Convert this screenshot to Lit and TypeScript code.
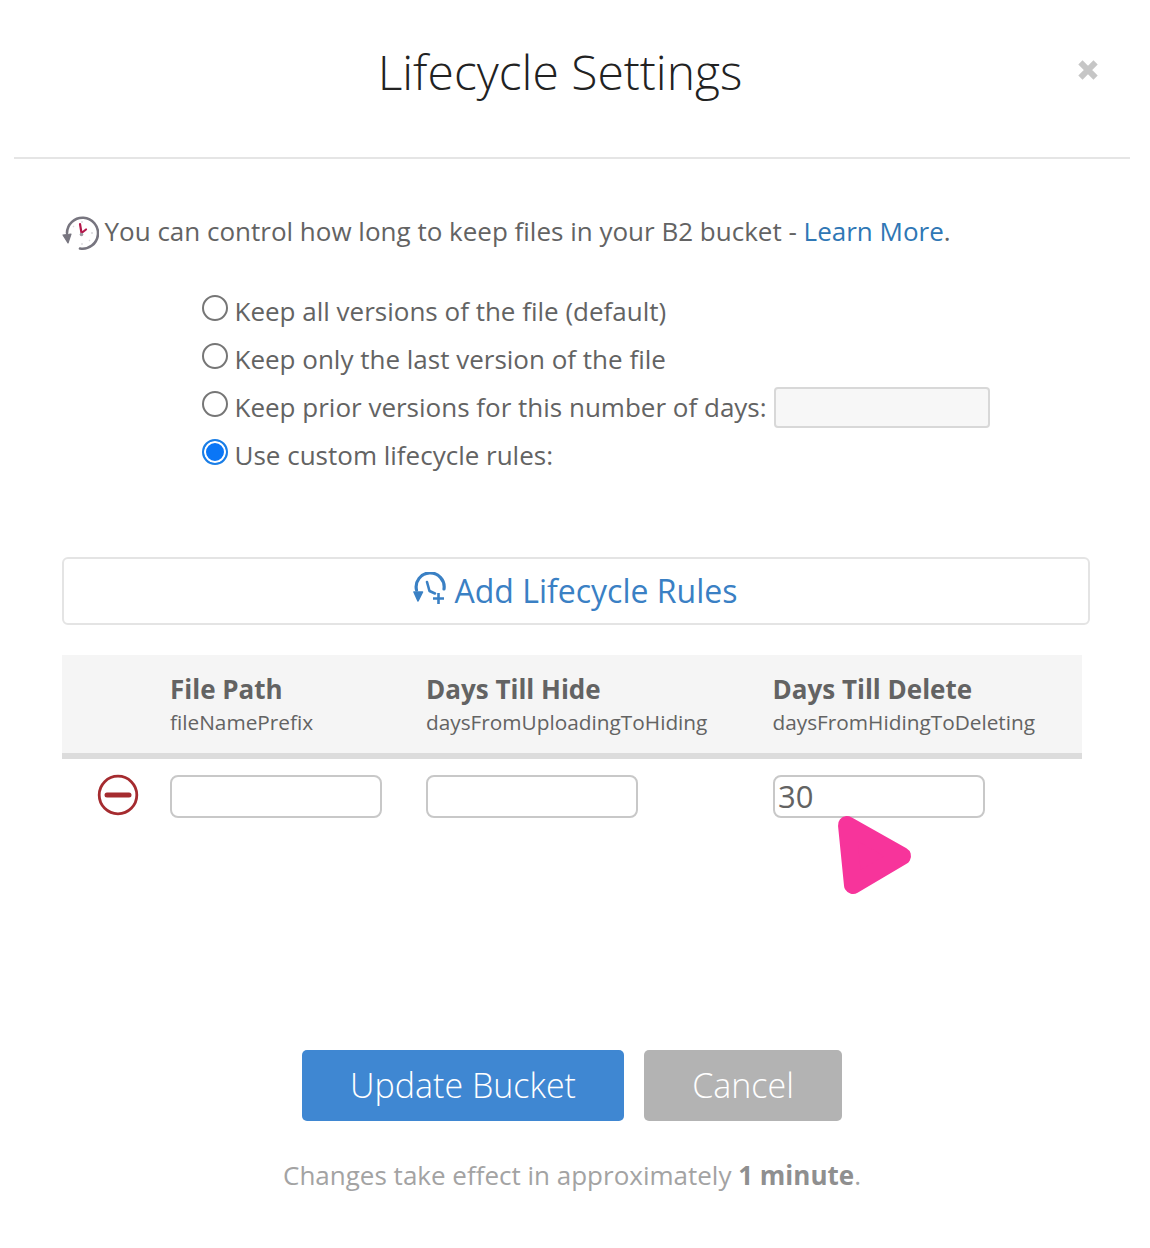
import { LitElement, html, css } from "lit";
import { customElement } from "lit/decorators.js";

@customElement("app-root")
export class AppRoot extends LitElement {
  static styles = css`
    :host { display: block; width: 1150px; height: 1248px; background: #fff; font-family: "Open Sans", sans-serif; color: #636363; position: relative; overflow: hidden; }
    * { box-sizing: border-box; }
    .header { margin: 0 20px 0 14px; padding-right: 24px; height: 159px; border-bottom: 2px solid #e5e5e5; display: grid; grid-template-columns: 1fr auto 1fr; align-items: start; }
    h1 { grid-column: 2; margin: 38px 0 0; font-size: 48px; line-height: 68px; font-weight: 300; color: #222; white-space: nowrap; }
    .close { grid-column: 3; justify-self: end; margin: 57px 5px 0 0; width: 26px; height: 26px; display: block; }
    .intro { margin: 54px 0 0 62px; display: flex; align-items: center; gap: 6px; font-size: 26px; line-height: 36px; white-space: nowrap; height: 36px; }
    .intro svg { width: 37px; height: 37px; flex: none; margin-top: 3px; margin-right: -0.5px; }
    a { color: #2f77b5; text-decoration: none; }
    .options { margin: 38px 0 0 202px; display: flex; flex-direction: column; }
    .opt { height: 48px; display: flex; align-items: center; gap: 7px; font-size: 26px; white-space: nowrap; }
    .radio { appearance: none; margin: -6px -0.5px 0 0; width: 26px; height: 26px; border-radius: 50%; border: 2px solid #767676; background: #fff; flex: none; }
    .radio:checked { border: 2px solid #1a7ee6; box-shadow: inset 0 0 0 2px #fff; background: #0a76f6; }
    .days { width: 216px; height: 41px; margin-left: 0; border: 2px solid #d8d8d8; border-radius: 4px; background: #f7f7f7; }
    .add { margin: 78px 0 0 62px; padding-right: 2px; width: 1028px; height: 68px; border: 2px solid #e4e4e4; border-radius: 6px; display: flex; align-items: center; justify-content: center; gap: 8px; font-size: 32px; line-height: 44px; color: #3a80c4; }
    .add svg { width: 34px; height: 34px; flex: none; margin-top: -4px; }
    .table { margin: 30px 0 0 62px; width: 1020px; }
    .grid { display: grid; grid-template-columns: 108px 256px 347px 1fr; }
    .thead { height: 104px; background: #f5f5f5; border-bottom: 6px solid #dcdcdc; padding-top: 16px; }
    .thead b { display: block; font-size: 26px; line-height: 36px; font-weight: 700; color: #636363; }
    .thead span { display: block; font-size: 20.8px; line-height: 30px; white-space: nowrap; }
    .thead div:last-child { margin-left: -0.5px; }
    .row { padding-top: 16px; align-items: start; }
    .minus { width: 42px; height: 42px; margin: -1px 0 0 35px; display: block; }
    .field { width: 212px; height: 43px; border: 2px solid #c8c8c8; border-radius: 8px; background: #fff; font: 31px/38px "Open Sans", sans-serif; color: #636363; padding: 0 3px 1px; outline: none; display: block; }
    .cursor { position: absolute; left: 836px; top: 812px; width: 80px; height: 86px; }
    .actions { margin-top: 232px; display: flex; justify-content: center; gap: 20px; margin-left: -6px; }
    .btn { height: 71px; border-radius: 5px; border: none; color: #fff; font: 300 34px/71px "Open Sans", sans-serif; display: flex; align-items: center; justify-content: center; }
    .primary { width: 322px; background: #3f87d2; }
    .secondary { width: 198px; background: #b3b3b3; }
    .note { margin: 36px 0 0 -6px; text-align: center; font-size: 26px; line-height: 36px; color: #a3a3a3; }
    .note b { font-weight: 700; color: #8f8f8f; }
  `;

  render() {
    return html`
      <div class="header">
        <h1>Lifecycle Settings</h1>
        <svg class="close" viewBox="0 0 24 24"><path d="M5 5 L19 19 M19 5 L5 19" stroke="#c6c6c6" stroke-width="5.5" fill="none"/></svg>
      </div>
      <div class="intro">
        <svg viewBox="0 0 37 37" fill="none">
          <path d="M5 19 A15.5 15.5 0 1 1 18 34.5" stroke="#77757f" stroke-width="2.6" stroke-linecap="round"/>
          <path d="M1 21 L9 20 L6 29 Z" fill="#77757f" stroke="#77757f" stroke-width="1.2" stroke-linejoin="round"/>
          <path d="M18 10 L19.5 19 L24 15.5" stroke="#b3174a" stroke-width="2.2" stroke-linecap="round" stroke-linejoin="round"/>
          <circle cx="19.5" cy="20.5" r="1.8" fill="#9c9aa2"/>
          <path d="M20 7 V9 M31 19 H29 M20 31 V29 M11 12 L12 13 M28 27 L27 26" stroke="#d9d8dc" stroke-width="1.3"/>
        </svg>
        <span>You can control how long to keep files in your B2 bucket - <a href="#">Learn More</a>.</span>
      </div>
      <div class="options">
        <label class="opt"><input class="radio" type="radio" name="k" />Keep all versions of the file (default)</label>
        <label class="opt"><input class="radio" type="radio" name="k" />Keep only the last version of the file</label>
        <label class="opt"><input class="radio" type="radio" name="k" />Keep prior versions for this number of days:<input class="days" disabled /></label>
        <label class="opt"><input class="radio" type="radio" name="k" checked />Use custom lifecycle rules:</label>
      </div>
      <div class="add">
        <svg viewBox="0 0 34 34" fill="none" stroke="#3a80c4">
          <path d="M3.5 18 A14 14 0 1 1 31 17" stroke-width="3.2" stroke-linecap="round"/>
          <path d="M1 20 L9.5 20 L5 29 Z" fill="#3a80c4" stroke-width="1.6" stroke-linejoin="round"/>
          <path d="M14 10 L16.5 19 L22 21.5" stroke-width="2.6" stroke-linecap="round" stroke-linejoin="round"/>
          <path d="M25.5 21 V32 M20 26.5 H31" stroke-width="2.6"/>
        </svg>
        <span>Add Lifecycle Rules</span>
      </div>
      <div class="table">
        <div class="grid thead">
          <div></div>
          <div><b>File Path</b><span>fileNamePrefix</span></div>
          <div><b>Days Till Hide</b><span>daysFromUploadingToHiding</span></div>
          <div><b>Days Till Delete</b><span>daysFromHidingToDeleting</span></div>
        </div>
        <div class="grid row">
          <svg class="minus" viewBox="0 0 42 42" fill="none"><circle cx="21" cy="21" r="18.8" stroke="#a52b2f" stroke-width="2.8"/><path d="M10 21 H32" stroke="#a52b2f" stroke-width="5" stroke-linecap="round"/></svg>
          <input class="field" />
          <input class="field" />
          <input class="field" .value=${"30"} />
        </div>
      </div>
      <svg class="cursor" viewBox="0 0 80 86"><path d="M11 13 L66 44 L17 73 Z" fill="#f7349b" stroke="#f7349b" stroke-width="18" stroke-linejoin="round"/></svg>
      <div class="actions">
        <button class="btn primary">Update Bucket</button>
        <button class="btn secondary">Cancel</button>
      </div>
      <div class="note">Changes take effect in approximately <b>1 minute</b>.</div>
    `;
  }
}
